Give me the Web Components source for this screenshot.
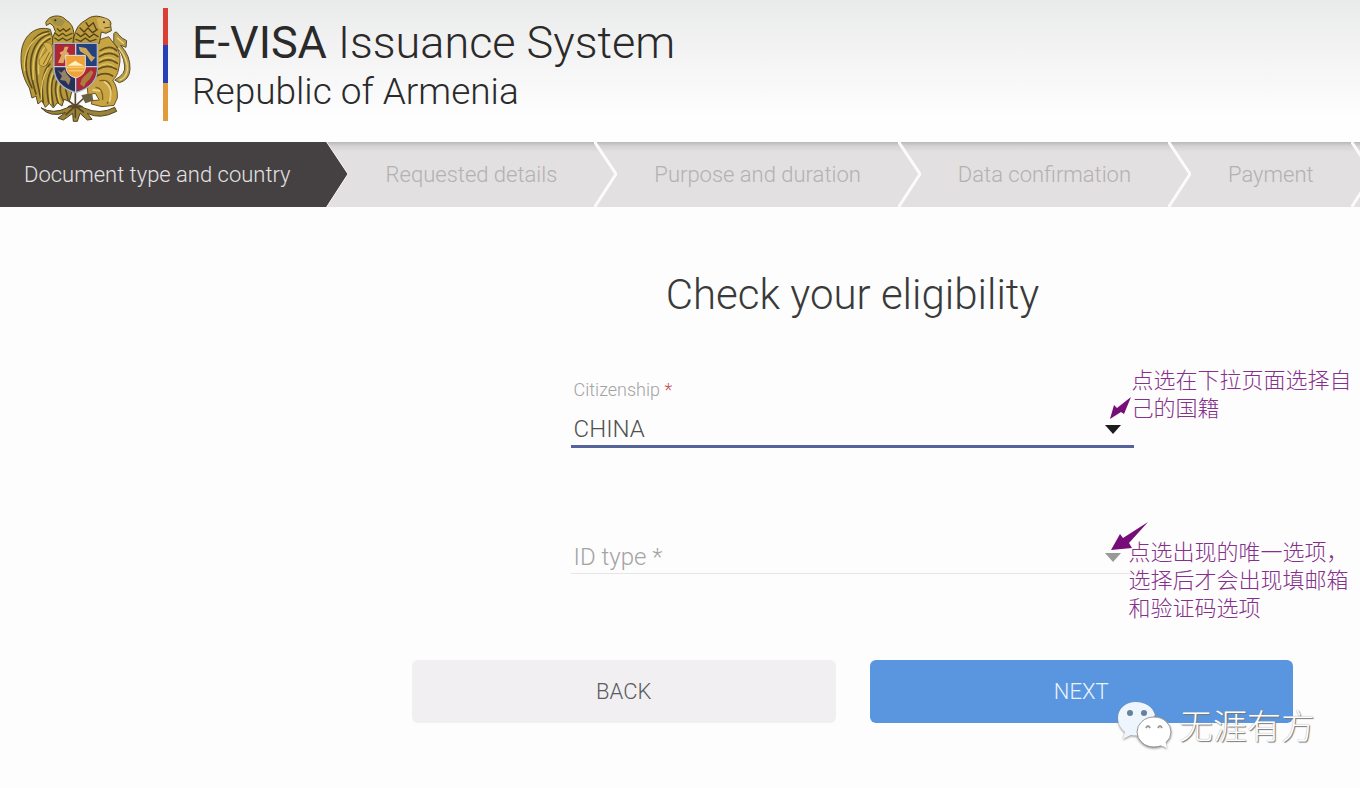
<!DOCTYPE html>
<html lang="en">
<head>
<meta charset="utf-8">
<meta name="viewport" content="width=device-width, initial-scale=1">
<title>E-VISA Issuance System</title>
<style>
    body {
        margin: 0;
        background: #fdfdfd;
        color: #3a3a3a;
        font-family: Roboto, "Noto Sans CJK SC", sans-serif;
        font-weight: 300;
    }
</style>
</head>
<body>

<visa-page>
    <visa-header slot="header">
        <span slot="title"><b>E-VISA</b> Issuance System</span>
        <span slot="subtitle">Republic of Armenia</span>
    </visa-header>

    <visa-steps slot="steps">
        <visa-step current>Document type and country</visa-step>
        <visa-step>Requested details</visa-step>
        <visa-step>Purpose and duration</visa-step>
        <visa-step>Data confirmation</visa-step>
        <visa-step>Payment</visa-step>
    </visa-steps>

    <visa-form heading="Check your eligibility">
        <visa-select name="citizenship" label="Citizenship" value="CHINA">
            <visa-note slot="note" kind="short">点选在下拉页面选择自己的国籍</visa-note>
        </visa-select>
        <visa-select name="idtype" label="ID type">
            <visa-note slot="note" kind="long">点选出现的唯一选项，选择后才会出现填邮箱和验证码选项</visa-note>
        </visa-select>
        <visa-button slot="actions">BACK</visa-button>
        <visa-button slot="actions" primary>NEXT</visa-button>
        <visa-watermark slot="mark">无涯有方</visa-watermark>
    </visa-form>
</visa-page>

<script>
// Base class: every element just fills an open shadow root with its markup
class VisaElement extends HTMLElement {
    constructor() {
        super();
        this.attachShadow({ mode: 'open' });
    }

    connectedCallback() {
        this.shadowRoot.innerHTML = this.render();
    }
}

class VisaPage extends VisaElement {
    render() {
        return `
            <style>
                :host { display: block; overflow: hidden; min-height: 100vh; }
            </style>
            <slot name="header"></slot>
            <slot name="steps"></slot>
            <main><slot></slot></main>
        `;
    }
}

class VisaEmblem extends VisaElement {
    render() {
        return `
            <style>
                :host { display: block; width: 112px; }
                svg { display: block; width: 100%; }
            </style>
            <svg viewBox="60 40 336 324" role="img" aria-label="Coat of arms of Armenia" stroke-linejoin="round" stroke-linecap="round">
                <!-- ribbon, sword and wheat under the shield -->
                <path d="M124 322 Q160 342 200 322 Q226 300 252 322 Q300 344 344 320 L350 332 Q300 358 262 338 L276 356 L262 358 L240 338 L232 362 L220 362 L218 338 L190 358 L174 352 L196 336 Q150 352 124 322Z" fill="#9c8437" stroke="#4d4123" stroke-width="3"/>
                <path d="M226 268 V350 M206 318 H246 M200 296 L250 334 M252 292 L198 342" stroke="#574829" stroke-width="5" fill="none"/>
                <path d="M244 284 L276 276 L280 300 L256 308Z" fill="#6b6140"/>
                <!-- eagle wing -->
                <path d="M150 86 C112 74 76 98 66 142 C58 184 66 228 88 262 L96 292 L108 286 L114 310 L126 300 L136 320 L148 308 L160 322 L172 306 L186 316 L192 296 L208 302 L216 270 L166 224 L160 120Z" fill="#b89a3c" stroke="#57481f" stroke-width="3"/>
                <path d="M146 92 C100 96 76 148 78 200 C80 226 88 246 96 262 M150 100 C112 110 90 152 92 202 C93 236 102 258 108 280 M150 114 C122 126 106 160 108 204 C110 248 116 268 122 292 M150 190 C130 210 122 250 130 306 M156 204 C140 230 138 262 146 306 M164 220 C152 246 152 270 160 314 M172 232 C164 258 164 274 174 306 M184 248 C178 264 180 280 190 300 M196 260 L204 296" stroke="#5d4d20" stroke-width="5" fill="none"/>
                <path d="M142 98 C92 108 68 160 74 210 M150 108 C106 124 96 176 100 236 M148 128 C124 144 114 180 116 220 M144 202 C124 234 122 264 124 296 M158 218 C146 246 148 276 152 308 M178 246 C170 264 172 286 180 306" stroke="#e3c65e" stroke-width="4" fill="none"/>
                <path d="M130 128 Q154 116 158 146 L158 178 L132 198 Q110 196 120 174 L140 150Z" fill="#d5b14b" stroke="#7b6426" stroke-width="2"/>
                <path d="M148 156 L130 190 M156 160 L140 194" stroke="#7b6426" stroke-width="3"/>
                <!-- eagle neck and head -->
                <path d="M138 64 Q146 48 166 46 Q186 44 198 58 Q220 70 222 100 L218 132 H158 Q154 110 166 92 L160 76 L150 68 L140 74Z" fill="#c0a03e" stroke="#57481f" stroke-width="3"/>
                <path d="M150 54 Q174 44 196 62 L184 78 L164 72Z" fill="#a39147"/>
                <circle cx="166" cy="59" r="3" fill="#2f2818"/>
                <path d="M172 84 L180 92 L190 84 L198 92 L210 84 M166 98 L176 106 L188 98 L198 106 L216 98 M164 112 L176 120 L188 112 L200 120 L216 112" stroke="#574717" stroke-width="4" fill="none"/>
                <!-- lion body, tail and paws -->
                <path d="M342 98 Q348 88 356 102 Q366 114 380 120 L378 140 L362 134 Q392 166 390 206 Q388 238 358 246 L344 238 Q378 220 374 196 Q370 156 342 128Z" fill="#b89d48" stroke="#5d4d2a" stroke-width="3"/>
                <path d="M352 112 L370 128 M356 142 Q384 174 382 208 Q378 232 360 238" stroke="#ead483" stroke-width="4" fill="none"/>
                <path d="M290 120 L326 108 L346 134 Q368 160 356 204 Q352 228 338 238 Q354 260 352 292 L342 314 L306 318 L274 310 L276 300 L298 298 L286 278 L264 282 L262 262 L292 224Z" fill="#c9a443" stroke="#6a5423" stroke-width="3"/>
                <path d="M300 150 Q332 130 350 150 M298 168 Q330 148 354 168 M298 186 Q326 168 352 188 M294 206 Q324 188 350 206 M290 226 Q316 212 338 226" stroke="#63501f" stroke-width="5" fill="none"/>
                <path d="M302 158 Q328 144 342 154 M300 178 Q326 160 346 178 M296 198 Q324 180 342 198" stroke="#e5c866" stroke-width="3" fill="none"/>
                <path d="M300 240 Q328 234 334 264 Q338 286 322 308 M288 260 Q310 262 308 296" stroke="#7b6027" stroke-width="4" fill="none"/>
                <path d="M314 244 Q342 262 328 302 M280 268 L298 270" stroke="#ecd07b" stroke-width="6" fill="none"/>
                <!-- lion mane and head -->
                <path d="M222 110 Q228 72 258 58 Q276 42 302 48 L320 54 Q336 60 332 74 L334 90 L318 98 L304 94 L298 128 H222Z" fill="#bf9d3e" stroke="#57481f" stroke-width="3"/>
                <path d="M290 52 Q318 48 328 62 L326 74 L332 86 L314 92 L296 82Z" fill="#d2b35a"/>
                <circle cx="312" cy="65" r="3" fill="#33291a"/>
                <path d="M314 82 L328 80" stroke="#57421d" stroke-width="3"/>
                <path d="M258 66 L266 78 L280 66 L288 84 M240 82 L252 94 L264 82 L278 96 L292 86 M230 98 L242 108 L256 98 L268 110 L282 100 L294 108 M228 116 L242 122 L256 112 L270 122 L288 116" stroke="#51411a" stroke-width="4" fill="none"/>
                <!-- shield -->
                <path d="M162 128 H292 V206 Q290 258 227 276 Q166 258 162 206Z" fill="#24417f" stroke="#aeb3bd" stroke-width="4"/>
                <path d="M165 131 H225 V196 H165Z" fill="#b12635"/>
                <path d="M230 200 H289 Q290 256 230 271Z" fill="#b12635"/>
                <path d="M165 200 H225 V271 Q168 256 165 200Z" fill="#273158"/>
                <path d="M227 130 V166 M227 228 V274 M164 198 H200 M256 198 H290" stroke="#cfcbd4" stroke-width="4"/>
                <path d="M174 186 L184 164 L178 156 L190 150 L194 138 L206 138 L200 152 L208 160 L196 170 L190 188Z" fill="#dbab65"/>
                <path d="M236 138 L258 142 L276 166 L286 170 L274 184 L260 164 L240 152Z" fill="#cfa657"/>
                <path d="M172 208 L184 216 L194 206 L200 220 L212 234 L206 254 L196 240 L180 238 L186 226Z" fill="#988365"/>
                <path d="M240 250 L246 234 L260 220 L274 208 L280 216 L270 234 L258 246 L252 260Z" fill="#a87d3e"/>
                <path d="M198 164 H256 V202 Q254 224 227 232 Q200 224 198 202Z" fill="#eda23a" stroke="#ece2d2" stroke-width="3"/>
                <path d="M202 195 L216 186 L226 180 L236 187 L252 195Z" fill="#fff0bc"/>
                <path d="M202 200 H252 M208 210 H248" stroke="#f7c86c" stroke-width="5"/>
            </svg>
        `;
    }
}

class VisaHeader extends VisaElement {
    render() {
        return `
            <style>
                :host { display: block; }
                header {
                    display: flex;
                    align-items: flex-start;
                    height: 142px;
                    padding: 8px 20px 0;
                    box-sizing: border-box;
                    background: linear-gradient(#e9ebea, #f3f3f3 50px, #fefefe 120px);
                }
                visa-emblem { margin-top: 6px; }
                .flag {
                    width: 5px;
                    height: 113px;
                    margin: 0 24px 0 31px;
                    background: linear-gradient(#d93f32 33%, #2540b8 33% 66%, #e19b3c 66%);
                }
                h1, p { margin: 0; font-weight: 300; white-space: nowrap; color: #2a2a2a; }
                h1 { font-size: 45px; line-height: 52px; margin-top: 9px; }
                p { font-size: 37px; line-height: 46px; }
            </style>
            <header>
                <visa-emblem></visa-emblem>
                <div class="flag"></div>
                <div>
                    <h1><slot name="title"></slot></h1>
                    <p><slot name="subtitle"></slot></p>
                </div>
            </header>
        `;
    }
}

class VisaSteps extends VisaElement {
    render() {
        return `
            <style>
                :host { display: block; }
                nav {
                    display: flex;
                    height: 65px;
                    overflow: hidden;
                    background: linear-gradient(#b9b7b8, #d4d2d3 4px, #e2e0e1 10px);
                }
            </style>
            <nav aria-label="Application steps"><slot></slot></nav>
        `;
    }
}

class VisaStep extends VisaElement {
    render() {
        return `
            <style>
                :host {
                    display: flex;
                    flex: none;
                    align-items: stretch;
                    font-size: 22px;
                    line-height: 65px;
                    white-space: nowrap;
                    color: #b3b1b2;
                }
                span { padding: 0 37px; }
                svg { display: block; width: 23px; height: 65px; }
                path { fill: none; stroke: #fbfbfb; stroke-width: 3; }
                :host([current]) { color: #e4e2e2; }
                :host([current]) span { padding: 0 35px 0 24px; background: #454142; }
                :host([current]) path { fill: #454142; stroke-width: 1; }
            </style>
            <span><slot></slot></span>
            <svg viewBox="0 0 23 65" aria-hidden="true"><path d="M0 -1 L22 32 L0 66"/></svg>
        `;
    }
}

class VisaForm extends VisaElement {
    render() {
        return `
            <style>
                :host { display: block; }
                form { padding: 61px 67px 64px 412px; }
                h2 {
                    margin: 0 0 56px;
                    font-size: 42px;
                    line-height: 54px;
                    font-weight: 300;
                    text-align: center;
                    white-space: nowrap;
                }
                .fields {
                    display: flex;
                    flex-direction: column;
                    gap: 58px;
                    width: 64%;
                    margin: 0 auto 86px;
                }
                .actions {
                    position: relative;
                    display: grid;
                    grid-template-columns: 1fr 1fr;
                    gap: 34px;
                }
            </style>
            <form>
                <h2>${this.getAttribute('heading')}</h2>
                <div class="fields"><slot></slot></div>
                <div class="actions">
                    <slot name="actions"></slot>
                    <slot name="mark"></slot>
                </div>
            </form>
        `;
    }
}

class VisaSelect extends VisaElement {
    render() {
        const name = this.getAttribute('name');
        const label = this.getAttribute('label');
        const value = this.getAttribute('value') || '';

        return `
            <style>
                :host { display: block; position: relative; }
                .field {
                    display: grid;
                    grid-template-rows: 35px 32px;
                    align-items: center;
                    border-bottom: 1px solid #e6e6e6;
                    color: #a3a3a3;
                }
                .field.filled { border-bottom: 3px solid #56629a; }
                label {
                    grid-area: 2 / 1;
                    z-index: 1;
                    padding-left: 3px;
                    font-size: 24px;
                    line-height: 32px;
                    pointer-events: none;
                }
                .filled label {
                    grid-area: 1 / 1;
                    align-self: start;
                    font-size: 18px;
                    line-height: 24px;
                }
                i { font-style: normal; }
                .filled i { color: #c4505c; }
                select {
                    grid-area: 2 / 1;
                    width: 100%;
                    height: 32px;
                    padding: 0 40px 0 3px;
                    border: 0;
                    outline: 0;
                    appearance: none;
                    background: none;
                    color: #505050;
                    font: inherit;
                    font-size: 24px;
                }
                svg {
                    grid-area: 2 / 1;
                    justify-self: end;
                    width: 16px;
                    margin-right: 13px;
                    fill: #999;
                    pointer-events: none;
                }
                .filled svg { fill: #1c1c1c; }
            </style>
            <div class="field ${value ? 'filled' : ''}">
                <label for="${name}">${label} <i>*</i></label>
                <select id="${name}" name="${name}" required>
                    <option>${value}</option>
                </select>
                <svg viewBox="0 0 16 9" aria-hidden="true"><path d="M0 0 H16 L8 9Z"/></svg>
            </div>
            <slot name="note"></slot>
        `;
    }
}

// Purple hint with an arrow, pinned over the right end of a field
class VisaNote extends VisaElement {
    render() {
        return `
            <style>
                :host {
                    position: absolute;
                    z-index: 2;
                    left: 100%;
                    top: -14px;
                    width: 225px;
                    margin-left: -3px;
                    color: #85308a;
                    font-family: "Noto Sans CJK SC", sans-serif;
                    font-size: 22px;
                    line-height: 28px;
                }
                :host([kind="long"]) { top: 30px; margin-left: -6px; }
                svg { position: absolute; right: 100%; fill: #760d78; overflow: visible; }
                .short { top: 33px; width: 22px; }
                .long { top: -14px; width: 37px; margin-right: -20px; }
            </style>
            ${this.getAttribute('kind') === 'short'
                ? '<svg class="short" viewBox="0 0 22 23" aria-hidden="true"><path d="M22 0 L15 17 L12 15 L1 22 L5 8 L8 11Z"/></svg>'
                : '<svg class="long" viewBox="0 0 37 28" aria-hidden="true"><path d="M37 0 L18 21 L21 26 L0 28 L9 12 L12 16Z"/></svg>'}
            <slot></slot>
        `;
    }
}

class VisaButton extends VisaElement {
    render() {
        return `
            <style>
                :host { display: block; }
                button {
                    width: 100%;
                    height: 63px;
                    border: 0;
                    border-radius: 6px;
                    background: #f1eff2;
                    color: #5c5c5c;
                    font: inherit;
                    font-size: 22px;
                    cursor: pointer;
                }
                :host([primary]) button { background: #5a96df; color: #e9f3fd; }
            </style>
            <button type="button"><slot></slot></button>
        `;
    }
}

class VisaWatermark extends VisaElement {
    render() {
        return `
            <style>
                :host {
                    position: absolute;
                    right: -22px;
                    top: 40px;
                    display: flex;
                    align-items: center;
                    gap: 7px;
                    color: #fff;
                    font-family: "Noto Sans CJK SC", sans-serif;
                    font-size: 34px;
                    line-height: 50px;
                    white-space: nowrap;
                    text-shadow: 1px 1px 1px #777, 0 0 1px #999;
                    pointer-events: none;
                }
                svg { width: 55px; height: 48px; filter: drop-shadow(0 1px 1px #888); }
            </style>
            <svg viewBox="0 0 55 48" aria-hidden="true">
                <path d="M19 1 C8 1 1 8 1 17 C1 23 4 28 8 31 L6 38 L14 34 Q18 35 22 34 L38 14 C36 6 28 1 19 1Z" fill="#eef5fd"/>
                <ellipse cx="37" cy="31" rx="17" ry="15" fill="#fff" stroke="#999" stroke-width="1"/>
                <path d="M43 44 L50 47 L48 39Z" fill="#fff"/>
                <g fill="#66809f"><circle cx="13" cy="12" r="3"/><circle cx="27" cy="12" r="3"/></g>
                <g fill="none" stroke="#999" stroke-width="2"><path d="M29 27 Q31 23 33 27 M41 27 Q43 23 45 27"/></g>
            </svg>
            <slot></slot>
        `;
    }
}

customElements.define('visa-emblem', VisaEmblem);
customElements.define('visa-header', VisaHeader);
customElements.define('visa-step', VisaStep);
customElements.define('visa-steps', VisaSteps);
customElements.define('visa-note', VisaNote);
customElements.define('visa-select', VisaSelect);
customElements.define('visa-button', VisaButton);
customElements.define('visa-watermark', VisaWatermark);
customElements.define('visa-form', VisaForm);
customElements.define('visa-page', VisaPage);
</script>
</body>
</html>
